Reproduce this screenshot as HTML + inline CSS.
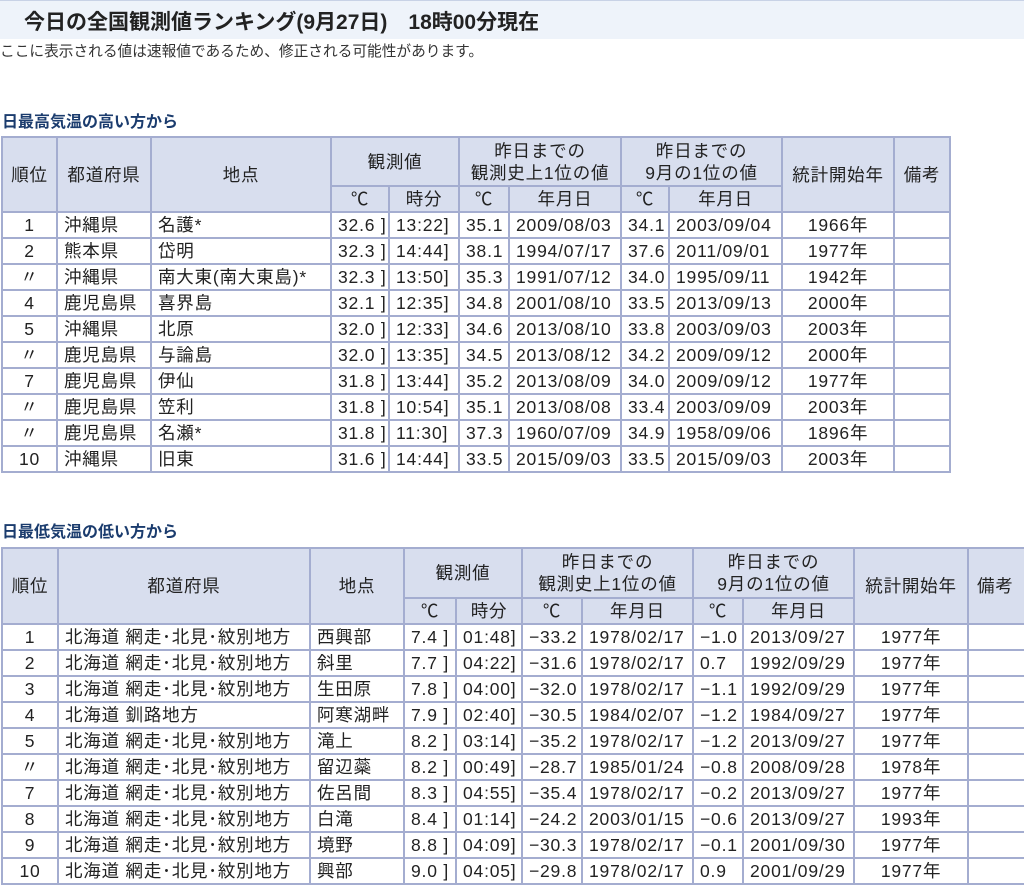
<!DOCTYPE html>
<html><head><meta charset="utf-8">
<style>
body{margin:0;width:1024px;height:882px;overflow:hidden;background:#fff;font-family:"Liberation Sans","Noto Sans CJK JP",sans-serif;color:#222}
.title{position:absolute;left:0;top:0;width:1024px;height:38px;background:#eef3fa;border-top:1px solid #c8d2e6}
.title span{position:absolute;left:24px;top:5px;font-size:21px;font-weight:bold;color:#222}
.note{position:absolute;left:0;top:40px;font-size:14.7px;color:#333}
.h{position:absolute;left:2px;font-size:16px;font-weight:bold;color:#1b3c6e}
table{position:absolute;border-collapse:collapse;table-layout:fixed;font-size:17.5px;letter-spacing:0.8px}
td,th{border:2px solid #a4add0;padding:0 0 0 6px;height:24px;line-height:22px;white-space:nowrap;overflow:hidden;font-weight:normal;text-align:left}
th{background:#d8deee;text-align:center;padding:0;line-height:22px;height:auto}
td.c{text-align:center;padding:0}
</style></head><body>
<div class="title"><span>今日の全国観測値ランキング(9月27日)　18時00分現在</span></div>
<div class="note">ここに表示される値は速報値であるため、修正される可能性があります。</div>
<div class="h" style="top:108px">日最高気温の高い方から</div>
<table style="left:1px;top:136px;width:949px">
<colgroup><col style="width:55px"><col style="width:94px"><col style="width:180px"><col style="width:58px"><col style="width:70px"><col style="width:50px"><col style="width:112px"><col style="width:48px"><col style="width:113px"><col style="width:112px"><col style="width:56px"></colgroup>
<tr style="height:49px"><th rowspan="2">順位</th><th rowspan="2">都道府県</th><th rowspan="2">地点</th><th colspan="2">観測値</th><th colspan="2">昨日までの<br>観測史上1位の値</th><th colspan="2">昨日までの<br>9月の1位の値</th><th rowspan="2">統計開始年</th><th rowspan="2">備考</th></tr>
<tr style="height:26px"><th>℃</th><th>時分</th><th>℃</th><th>年月日</th><th>℃</th><th>年月日</th></tr>
<tr><td class="c">1</td><td>沖縄県</td><td>名護*</td><td>32.6 ]</td><td>13:22]</td><td>35.1</td><td>2009/08/03</td><td>34.1</td><td>2003/09/04</td><td class="c">1966年</td><td></td></tr>
<tr><td class="c">2</td><td>熊本県</td><td>岱明</td><td>32.3 ]</td><td>14:44]</td><td>38.1</td><td>1994/07/17</td><td>37.6</td><td>2011/09/01</td><td class="c">1977年</td><td></td></tr>
<tr><td class="c">〃</td><td>沖縄県</td><td>南大東(南大東島)*</td><td>32.3 ]</td><td>13:50]</td><td>35.3</td><td>1991/07/12</td><td>34.0</td><td>1995/09/11</td><td class="c">1942年</td><td></td></tr>
<tr><td class="c">4</td><td>鹿児島県</td><td>喜界島</td><td>32.1 ]</td><td>12:35]</td><td>34.8</td><td>2001/08/10</td><td>33.5</td><td>2013/09/13</td><td class="c">2000年</td><td></td></tr>
<tr><td class="c">5</td><td>沖縄県</td><td>北原</td><td>32.0 ]</td><td>12:33]</td><td>34.6</td><td>2013/08/10</td><td>33.8</td><td>2003/09/03</td><td class="c">2003年</td><td></td></tr>
<tr><td class="c">〃</td><td>鹿児島県</td><td>与論島</td><td>32.0 ]</td><td>13:35]</td><td>34.5</td><td>2013/08/12</td><td>34.2</td><td>2009/09/12</td><td class="c">2000年</td><td></td></tr>
<tr><td class="c">7</td><td>鹿児島県</td><td>伊仙</td><td>31.8 ]</td><td>13:44]</td><td>35.2</td><td>2013/08/09</td><td>34.0</td><td>2009/09/12</td><td class="c">1977年</td><td></td></tr>
<tr><td class="c">〃</td><td>鹿児島県</td><td>笠利</td><td>31.8 ]</td><td>10:54]</td><td>35.1</td><td>2013/08/08</td><td>33.4</td><td>2003/09/09</td><td class="c">2003年</td><td></td></tr>
<tr><td class="c">〃</td><td>鹿児島県</td><td>名瀬*</td><td>31.8 ]</td><td>11:30]</td><td>37.3</td><td>1960/07/09</td><td>34.9</td><td>1958/09/06</td><td class="c">1896年</td><td></td></tr>
<tr><td class="c">10</td><td>沖縄県</td><td>旧東</td><td>31.6 ]</td><td>14:44]</td><td>33.5</td><td>2015/09/03</td><td>33.5</td><td>2015/09/03</td><td class="c">2003年</td><td></td></tr>
</table>
<div class="h" style="top:518px">日最低気温の低い方から</div>
<table style="left:1px;top:547px;width:1060px">
<colgroup><col style="width:56px"><col style="width:252px"><col style="width:94px"><col style="width:52px"><col style="width:66px"><col style="width:60px"><col style="width:111px"><col style="width:50px"><col style="width:111px"><col style="width:114px"><col style="width:94px"></colgroup>
<tr style="height:50px"><th rowspan="2">順位</th><th rowspan="2">都道府県</th><th rowspan="2">地点</th><th colspan="2">観測値</th><th colspan="2">昨日までの<br>観測史上1位の値</th><th colspan="2">昨日までの<br>9月の1位の値</th><th rowspan="2">統計開始年</th><th rowspan="2" style="text-align:left;padding-left:8px">備考</th></tr>
<tr style="height:26px"><th>℃</th><th>時分</th><th>℃</th><th>年月日</th><th>℃</th><th>年月日</th></tr>
<tr><td class="c">1</td><td>北海道 網走･北見･紋別地方</td><td>西興部</td><td>7.4 ]</td><td>01:48]</td><td>−33.2</td><td>1978/02/17</td><td>−1.0</td><td>2013/09/27</td><td class="c">1977年</td><td></td></tr>
<tr><td class="c">2</td><td>北海道 網走･北見･紋別地方</td><td>斜里</td><td>7.7 ]</td><td>04:22]</td><td>−31.6</td><td>1978/02/17</td><td>0.7</td><td>1992/09/29</td><td class="c">1977年</td><td></td></tr>
<tr><td class="c">3</td><td>北海道 網走･北見･紋別地方</td><td>生田原</td><td>7.8 ]</td><td>04:00]</td><td>−32.0</td><td>1978/02/17</td><td>−1.1</td><td>1992/09/29</td><td class="c">1977年</td><td></td></tr>
<tr><td class="c">4</td><td>北海道 釧路地方</td><td>阿寒湖畔</td><td>7.9 ]</td><td>02:40]</td><td>−30.5</td><td>1984/02/07</td><td>−1.2</td><td>1984/09/27</td><td class="c">1977年</td><td></td></tr>
<tr><td class="c">5</td><td>北海道 網走･北見･紋別地方</td><td>滝上</td><td>8.2 ]</td><td>03:14]</td><td>−35.2</td><td>1978/02/17</td><td>−1.2</td><td>2013/09/27</td><td class="c">1977年</td><td></td></tr>
<tr><td class="c">〃</td><td>北海道 網走･北見･紋別地方</td><td>留辺蘂</td><td>8.2 ]</td><td>00:49]</td><td>−28.7</td><td>1985/01/24</td><td>−0.8</td><td>2008/09/28</td><td class="c">1978年</td><td></td></tr>
<tr><td class="c">7</td><td>北海道 網走･北見･紋別地方</td><td>佐呂間</td><td>8.3 ]</td><td>04:55]</td><td>−35.4</td><td>1978/02/17</td><td>−0.2</td><td>2013/09/27</td><td class="c">1977年</td><td></td></tr>
<tr><td class="c">8</td><td>北海道 網走･北見･紋別地方</td><td>白滝</td><td>8.4 ]</td><td>01:14]</td><td>−24.2</td><td>2003/01/15</td><td>−0.6</td><td>2013/09/27</td><td class="c">1993年</td><td></td></tr>
<tr><td class="c">9</td><td>北海道 網走･北見･紋別地方</td><td>境野</td><td>8.8 ]</td><td>04:09]</td><td>−30.3</td><td>1978/02/17</td><td>−0.1</td><td>2001/09/30</td><td class="c">1977年</td><td></td></tr>
<tr><td class="c">10</td><td>北海道 網走･北見･紋別地方</td><td>興部</td><td>9.0 ]</td><td>04:05]</td><td>−29.8</td><td>1978/02/17</td><td>0.9</td><td>2001/09/29</td><td class="c">1977年</td><td></td></tr>
</table>
</body></html>
